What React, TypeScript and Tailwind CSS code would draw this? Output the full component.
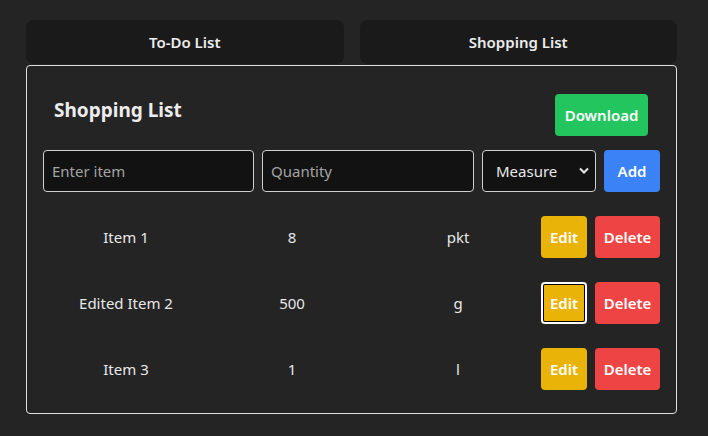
import React, { useState } from 'react';

type Item = { name: string; qty: string; unit: string };

const items: Item[] = [
  { name: 'Item 1', qty: '8', unit: 'pkt' },
  { name: 'Edited Item 2', qty: '500', unit: 'g' },
  { name: 'Item 3', qty: '1', unit: 'l' },
];

const font = { fontFamily: '"Noto Sans", "Open Sans", sans-serif' };

export default function App() {
  const [tab, setTab] = useState('shopping');

  return (
    <div
      className="min-h-screen bg-[#242424] text-[#e8e8e8] px-[26px] pt-5 font-['Noto_Sans',sans-serif]"
      style={font}
    >
      <div className="w-[651px]">
        {/* tabs */}
        <div className="grid grid-cols-2 gap-4">
          <button
            onClick={() => setTab('todo')}
            className="h-11 rounded-lg bg-[#1a1a1a] text-[15px] font-semibold text-[#ececec]"
          >
            To-Do List
          </button>
          <button
            onClick={() => setTab('shopping')}
            className="h-11 rounded-lg bg-[#1a1a1a] text-[15px] font-semibold text-[#ececec]"
          >
            Shopping List
          </button>
        </div>

        {/* panel */}
        <div className="mt-px border border-[#e0e0e0] rounded-[4px] px-4 pt-4 pb-[23px]">
          <div className="flex justify-between items-start pl-[11px] pr-3 pt-3">
            <h2 className="mt-[2px] text-[19px] leading-7 font-bold text-[#ececec]">Shopping List</h2>
            <button className="w-[93px] h-[42px] rounded-[4px] bg-[#22c55e] text-white text-[15px] font-semibold">
              Download
            </button>
          </div>

          <div className="mt-[14px] flex gap-2 h-[42px]">
            <input
              placeholder="Enter item"
              className="w-[211px] rounded-[4px] border border-[#cfcfcf] bg-[#121212] px-2 text-[15px] text-white placeholder:text-[#a3a3a3] outline-none"
            />
            <input
              placeholder="Quantity"
              className="w-[212px] rounded-[4px] border border-[#cfcfcf] bg-[#121212] px-2 text-[15px] text-white placeholder:text-[#a3a3a3] outline-none"
            />
            <div className="relative w-[114px]">
              <select className="w-full h-full appearance-none rounded-[4px] border border-[#cfcfcf] bg-[#121212] pl-[13px] text-[15px] text-[#e8e8e8] outline-none">
                <option>Measure</option>
                <option>pkt</option>
                <option>g</option>
                <option>l</option>
              </select>
              <svg
                className="pointer-events-none absolute right-[7px] top-[17px]"
                width="10"
                height="7"
                viewBox="0 0 10 7"
              >
                <path d="M1 1.5 L5 5.5 L9 1.5" fill="none" stroke="#e8e8e8" strokeWidth="2" />
              </svg>
            </div>
            <button className="w-14 rounded-[4px] bg-[#3b82f6] text-white text-[15px] font-semibold">Add</button>
          </div>

          <div className="mt-6 flex flex-col gap-6">
            {items.map((it, i) => (
              <div key={it.name} className="flex items-center h-[42px] text-[15px]">
                <div className="w-[166px] text-center">{it.name}</div>
                <div className="w-[166px] text-center">{it.qty}</div>
                <div className="w-[166px] text-center">{it.unit}</div>
                <div className="flex gap-2">
                  <button
                    className={
                      i === 1
                        ? 'w-[46px] h-[42px] rounded-[4px] bg-[#eab308] text-white text-[15px] font-semibold shadow-[inset_0_0_0_2px_#fff,inset_0_0_0_3px_#000]'
                        : 'w-[46px] h-[42px] rounded-[4px] bg-[#eab308] text-white text-[15px] font-semibold'
                    }
                  >
                    Edit
                  </button>
                  <button className="w-[65px] h-[42px] rounded-[4px] bg-[#ef4444] text-white text-[15px] font-semibold">
                    Delete
                  </button>
                </div>
              </div>
            ))}
          </div>
        </div>
      </div>
    </div>
  );
}
